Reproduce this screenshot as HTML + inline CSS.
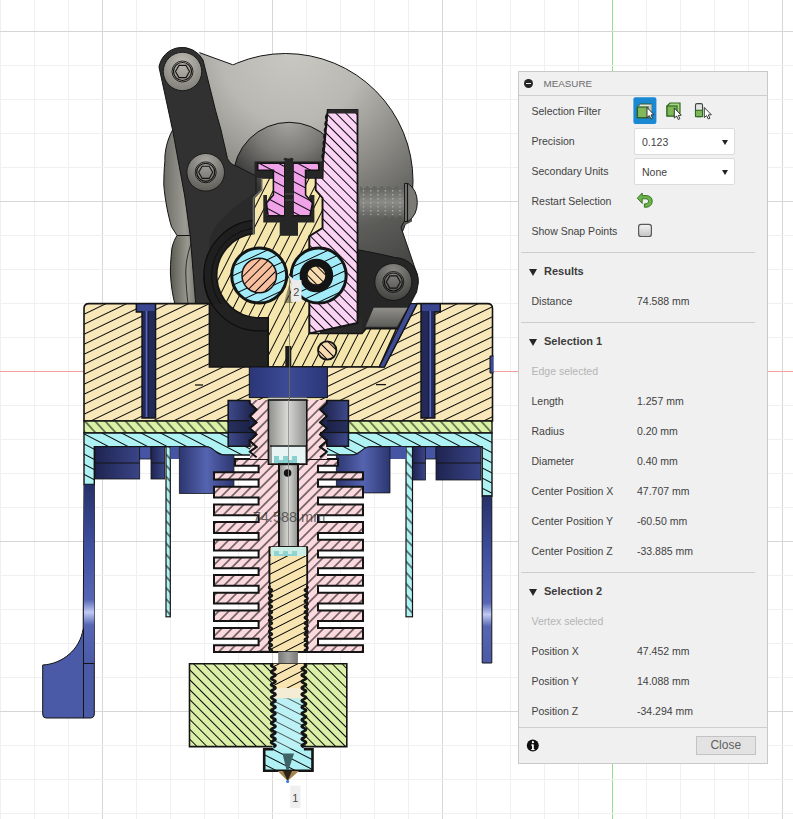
<!DOCTYPE html>
<html><head><meta charset="utf-8">
<style>
html,body{margin:0;padding:0;width:793px;height:819px;overflow:hidden;background:#fff;}
body{position:relative;font-family:"Liberation Sans",sans-serif;}
#bg{position:absolute;left:0;top:0;}
#cad{position:absolute;left:0;top:0;}
#panel{position:absolute;left:518px;top:71px;width:250px;height:693px;background:#f0f0f0;border:1px solid #c9c9c9;box-sizing:border-box;}
.hdr{position:absolute;left:0;top:0;width:100%;height:24px;border-bottom:1px solid #cfcfcf;box-sizing:border-box;}
.hdr .t{position:absolute;left:24.6px;top:6.2px;font-size:9.8px;color:#6b6b6b;letter-spacing:0px;}
.hdr .m{position:absolute;left:5px;top:7px;width:9px;height:9px;border-radius:50%;background:#262626;}
.hdr .m:after{content:"";position:absolute;left:2px;top:4px;width:5px;height:1.4px;background:#f0f0f0;}
.lb{position:absolute;left:12.5px;font-size:10.5px;margin-top:-0.2px;color:#424242;white-space:nowrap;}
.vl{position:absolute;left:118px;font-size:10.5px;margin-top:-0.2px;color:#424242;white-space:nowrap;}
.gr{color:#b4b4b4;}
.sec{position:absolute;left:25px;font-size:11px;font-weight:bold;color:#3c3c3c;}
.tri{position:absolute;left:10px;width:0;height:0;border-left:4px solid transparent;border-right:4px solid transparent;border-top:7px solid #262626;}
.sep{position:absolute;left:2px;width:234px;height:1px;background:#cdcdcd;}
.dd{position:absolute;left:115px;width:101px;height:27px;background:#fff;border:1px solid #dcdcdc;box-sizing:border-box;border-radius:2px;}
 .foot{position:absolute;left:0;top:654.8px;width:100%;height:1px;background:#cfcfcf;}
.btn{position:absolute;left:176.8px;top:663.8px;width:60px;height:19px;box-sizing:border-box;border:1px solid #c3c3c3;background:#e3e3e3;color:#606060;font-size:12px;text-align:center;line-height:17px;}
.dd span{position:absolute;left:7px;top:6.5px;font-size:10.5px;color:#424242;}
.dd i{position:absolute;right:6px;top:11px;border-left:3.5px solid transparent;border-right:3.5px solid transparent;border-top:5px solid #222;}
</style></head><body>
<svg id="bg" width="793" height="819">
<line x1="0.5" y1="0" x2="0.5" y2="819" stroke="#f0f0f0" stroke-width="1"/>
<line x1="34.5" y1="0" x2="34.5" y2="819" stroke="#f0f0f0" stroke-width="1"/>
<line x1="68.5" y1="0" x2="68.5" y2="819" stroke="#f0f0f0" stroke-width="1"/>
<line x1="102.5" y1="0" x2="102.5" y2="819" stroke="#d6d6d6" stroke-width="1"/>
<line x1="136.5" y1="0" x2="136.5" y2="819" stroke="#f0f0f0" stroke-width="1"/>
<line x1="170.5" y1="0" x2="170.5" y2="819" stroke="#f0f0f0" stroke-width="1"/>
<line x1="204.5" y1="0" x2="204.5" y2="819" stroke="#f0f0f0" stroke-width="1"/>
<line x1="238.5" y1="0" x2="238.5" y2="819" stroke="#f0f0f0" stroke-width="1"/>
<line x1="272.5" y1="0" x2="272.5" y2="819" stroke="#d6d6d6" stroke-width="1"/>
<line x1="306.5" y1="0" x2="306.5" y2="819" stroke="#f0f0f0" stroke-width="1"/>
<line x1="340.5" y1="0" x2="340.5" y2="819" stroke="#f0f0f0" stroke-width="1"/>
<line x1="374.5" y1="0" x2="374.5" y2="819" stroke="#f0f0f0" stroke-width="1"/>
<line x1="408.5" y1="0" x2="408.5" y2="819" stroke="#f0f0f0" stroke-width="1"/>
<line x1="442.5" y1="0" x2="442.5" y2="819" stroke="#d6d6d6" stroke-width="1"/>
<line x1="476.5" y1="0" x2="476.5" y2="819" stroke="#f0f0f0" stroke-width="1"/>
<line x1="510.5" y1="0" x2="510.5" y2="819" stroke="#f0f0f0" stroke-width="1"/>
<line x1="544.5" y1="0" x2="544.5" y2="819" stroke="#f0f0f0" stroke-width="1"/>
<line x1="578.5" y1="0" x2="578.5" y2="819" stroke="#f0f0f0" stroke-width="1"/>
<line x1="612.5" y1="0" x2="612.5" y2="819" stroke="#8fe08f" stroke-width="1"/>
<line x1="646.5" y1="0" x2="646.5" y2="819" stroke="#f0f0f0" stroke-width="1"/>
<line x1="680.5" y1="0" x2="680.5" y2="819" stroke="#f0f0f0" stroke-width="1"/>
<line x1="714.5" y1="0" x2="714.5" y2="819" stroke="#f0f0f0" stroke-width="1"/>
<line x1="748.5" y1="0" x2="748.5" y2="819" stroke="#f0f0f0" stroke-width="1"/>
<line x1="782.5" y1="0" x2="782.5" y2="819" stroke="#d6d6d6" stroke-width="1"/>
<line x1="0" y1="31.5" x2="793" y2="31.5" stroke="#d6d6d6" stroke-width="1"/>
<line x1="0" y1="65.5" x2="793" y2="65.5" stroke="#f0f0f0" stroke-width="1"/>
<line x1="0" y1="99.5" x2="793" y2="99.5" stroke="#f0f0f0" stroke-width="1"/>
<line x1="0" y1="133.5" x2="793" y2="133.5" stroke="#f0f0f0" stroke-width="1"/>
<line x1="0" y1="167.5" x2="793" y2="167.5" stroke="#f0f0f0" stroke-width="1"/>
<line x1="0" y1="201.5" x2="793" y2="201.5" stroke="#d6d6d6" stroke-width="1"/>
<line x1="0" y1="235.5" x2="793" y2="235.5" stroke="#f0f0f0" stroke-width="1"/>
<line x1="0" y1="269.5" x2="793" y2="269.5" stroke="#f0f0f0" stroke-width="1"/>
<line x1="0" y1="303.5" x2="793" y2="303.5" stroke="#f0f0f0" stroke-width="1"/>
<line x1="0" y1="337.5" x2="793" y2="337.5" stroke="#f0f0f0" stroke-width="1"/>
<line x1="0" y1="371.5" x2="793" y2="371.5" stroke="#f2a0a0" stroke-width="1"/>
<line x1="0" y1="405.5" x2="793" y2="405.5" stroke="#f0f0f0" stroke-width="1"/>
<line x1="0" y1="439.5" x2="793" y2="439.5" stroke="#f0f0f0" stroke-width="1"/>
<line x1="0" y1="473.5" x2="793" y2="473.5" stroke="#f0f0f0" stroke-width="1"/>
<line x1="0" y1="507.5" x2="793" y2="507.5" stroke="#f0f0f0" stroke-width="1"/>
<line x1="0" y1="541.5" x2="793" y2="541.5" stroke="#d6d6d6" stroke-width="1"/>
<line x1="0" y1="575.5" x2="793" y2="575.5" stroke="#f0f0f0" stroke-width="1"/>
<line x1="0" y1="609.5" x2="793" y2="609.5" stroke="#f0f0f0" stroke-width="1"/>
<line x1="0" y1="643.5" x2="793" y2="643.5" stroke="#f0f0f0" stroke-width="1"/>
<line x1="0" y1="677.5" x2="793" y2="677.5" stroke="#f0f0f0" stroke-width="1"/>
<line x1="0" y1="711.5" x2="793" y2="711.5" stroke="#d6d6d6" stroke-width="1"/>
<line x1="0" y1="745.5" x2="793" y2="745.5" stroke="#f0f0f0" stroke-width="1"/>
<line x1="0" y1="779.5" x2="793" y2="779.5" stroke="#f0f0f0" stroke-width="1"/>
<line x1="0" y1="813.5" x2="793" y2="813.5" stroke="#f0f0f0" stroke-width="1"/>
</svg>
<svg id="cad" width="793" height="819">
<defs><pattern id="hTan" patternUnits="userSpaceOnUse" width="36.0" height="9.0" patternTransform="translate(0,0) rotate(-25.8)"><line x1="0" y1="4.5" x2="36.0" y2="4.5" stroke="#000000" stroke-width="0.95"/></pattern>
<pattern id="hYel" patternUnits="userSpaceOnUse" width="35.2" height="8.8" patternTransform="translate(0,0) rotate(-63)"><line x1="0" y1="4.4" x2="35.2" y2="4.4" stroke="#000000" stroke-width="0.95"/></pattern>
<pattern id="hPin" patternUnits="userSpaceOnUse" width="26.0" height="6.5" patternTransform="translate(0,0) rotate(45)"><line x1="0" y1="3.25" x2="26.0" y2="3.25" stroke="#000000" stroke-width="0.95"/></pattern>
<pattern id="hPinkL" patternUnits="userSpaceOnUse" width="28.0" height="7.0" patternTransform="translate(0,0) rotate(45)"><line x1="0" y1="3.5" x2="28.0" y2="3.5" stroke="#000000" stroke-width="0.95"/></pattern>
<pattern id="hPinkI" patternUnits="userSpaceOnUse" width="36.0" height="9.0" patternTransform="translate(0,0) rotate(28)"><line x1="0" y1="4.5" x2="36.0" y2="4.5" stroke="#000000" stroke-width="0.95"/></pattern>
<pattern id="hSink" patternUnits="userSpaceOnUse" width="28.8" height="7.2" patternTransform="translate(0,0) rotate(-45)"><line x1="0" y1="3.6" x2="28.8" y2="3.6" stroke="#000000" stroke-width="0.95"/></pattern>
<pattern id="hCyan" patternUnits="userSpaceOnUse" width="36.0" height="9.0" patternTransform="translate(0,0) rotate(27.4)"><line x1="0" y1="4.5" x2="36.0" y2="4.5" stroke="#000000" stroke-width="0.95"/></pattern>
<pattern id="hGreenP" patternUnits="userSpaceOnUse" width="30.0" height="7.5" patternTransform="translate(0,0) rotate(47.6)"><line x1="0" y1="3.75" x2="30.0" y2="3.75" stroke="#000000" stroke-width="0.95"/></pattern>
<pattern id="hHeat" patternUnits="userSpaceOnUse" width="28.0" height="7.0" patternTransform="translate(0,0) rotate(45)"><line x1="0" y1="3.5" x2="28.0" y2="3.5" stroke="#000000" stroke-width="0.95"/></pattern>
<pattern id="hBear" patternUnits="userSpaceOnUse" width="34.4" height="8.6" patternTransform="translate(0,0) rotate(-25)"><line x1="0" y1="4.3" x2="34.4" y2="4.3" stroke="#000000" stroke-width="0.95"/></pattern>
<pattern id="hPeach" patternUnits="userSpaceOnUse" width="26.0" height="6.5" patternTransform="translate(0,0) rotate(-45)"><line x1="0" y1="3.25" x2="26.0" y2="3.25" stroke="#000000" stroke-width="0.95"/></pattern>
<pattern id="hBrk" patternUnits="userSpaceOnUse" width="33.6" height="8.4" patternTransform="translate(0,0) rotate(-27)"><line x1="0" y1="4.2" x2="33.6" y2="4.2" stroke="#000000" stroke-width="0.95"/></pattern>
<pattern id="hNoz" patternUnits="userSpaceOnUse" width="34.8" height="8.7" patternTransform="translate(0,0) rotate(27)"><line x1="0" y1="4.35" x2="34.8" y2="4.35" stroke="#000000" stroke-width="0.95"/></pattern>
<radialGradient id="gBody" cx="292" cy="50" r="240" gradientUnits="userSpaceOnUse">
<stop offset="0" stop-color="#c9c8c2"/><stop offset="0.3" stop-color="#b9b8b2"/><stop offset="0.55" stop-color="#8c8b86"/><stop offset="0.8" stop-color="#5c5c59"/><stop offset="1" stop-color="#474745"/></radialGradient>
<radialGradient id="gInner" cx="288" cy="118" r="75" gradientUnits="userSpaceOnUse">
<stop offset="0" stop-color="#a9a8a3"/><stop offset="0.5" stop-color="#7a7975"/><stop offset="1" stop-color="#343433"/></radialGradient>
<radialGradient id="gWash0" cx="0.5" cy="0.25" r="0.8"><stop offset="0" stop-color="#bcbab2"/><stop offset="1" stop-color="#7e7c76"/></radialGradient>
<radialGradient id="gWash1" cx="0.5" cy="0.2" r="0.85"><stop offset="0" stop-color="#a9a7a0"/><stop offset="1" stop-color="#5a5954"/></radialGradient>
<radialGradient id="gWash2" cx="0.5" cy="0.2" r="0.85"><stop offset="0" stop-color="#8a8984"/><stop offset="1" stop-color="#3e3e3c"/></radialGradient>
<linearGradient id="gLobeA" x1="0" y1="0" x2="1" y2="0"><stop offset="0" stop-color="#6f6e68"/><stop offset="0.6" stop-color="#9c9b94"/><stop offset="1" stop-color="#5d5c57"/></linearGradient>
<linearGradient id="gBolt" x1="0" y1="0" x2="0" y2="1"><stop offset="0" stop-color="#5f5f5c"/><stop offset="0.5" stop-color="#8a8a86"/><stop offset="1" stop-color="#5f5f5c"/></linearGradient>
<linearGradient id="gWedge" x1="0" y1="0" x2="0" y2="1"><stop offset="0" stop-color="#8f8e89"/><stop offset="1" stop-color="#5c5c59"/></linearGradient>
<linearGradient id="gLobe" x1="0" y1="0" x2="1" y2="0">
<stop offset="0" stop-color="#5a5a52"/><stop offset="0.5" stop-color="#9a998f"/><stop offset="1" stop-color="#55554f"/></linearGradient>
<linearGradient id="gNavyV" x1="0" y1="0" x2="1" y2="0">
<stop offset="0" stop-color="#2c3670"/><stop offset="0.5" stop-color="#5564b0"/><stop offset="1" stop-color="#2c3670"/></linearGradient>
<linearGradient id="gPost" x1="0" y1="0" x2="0" y2="1">
<stop offset="0" stop-color="#26306a"/><stop offset="0.35" stop-color="#4050a0"/><stop offset="0.64" stop-color="#5666b4"/><stop offset="0.71" stop-color="#c0caf4"/><stop offset="0.78" stop-color="#5666b4"/><stop offset="1" stop-color="#4a5aa6"/></linearGradient>
<linearGradient id="gNavyDark" x1="0" y1="0" x2="1" y2="0">
<stop offset="0" stop-color="#1e2450"/><stop offset="1" stop-color="#3a4588"/></linearGradient>
<linearGradient id="gNut0" x1="0" y1="0" x2="1" y2="0"><stop offset="0" stop-color="#3e4a8c"/><stop offset="1" stop-color="#1a1f44"/></linearGradient>
<linearGradient id="gNut1" x1="0" y1="0" x2="1" y2="0"><stop offset="0" stop-color="#1a1f44"/><stop offset="1" stop-color="#3e4a8c"/></linearGradient>
<linearGradient id="gRod" x1="0" y1="0" x2="1" y2="0"><stop offset="0" stop-color="#777775"/><stop offset="0.5" stop-color="#a2a2a0"/><stop offset="1" stop-color="#777775"/></linearGradient>
<linearGradient id="gNavyC" x1="0" y1="0" x2="1" y2="0"><stop offset="0" stop-color="#2b3678"/><stop offset="0.5" stop-color="#3d4b96"/><stop offset="1" stop-color="#2b3678"/></linearGradient>
<linearGradient id="gTube" x1="0" y1="0" x2="1" y2="0">
<stop offset="0" stop-color="#8e8e8c"/><stop offset="0.5" stop-color="#d8d8d4"/><stop offset="1" stop-color="#8e8e8c"/></linearGradient></defs>
<path d="M172.6,130 C167,140 164.5,152 164.9,160.8 C164,170 163.8,178 163.8,185 C165,200 168,215 171.5,226.7 L177,235.5 L200,235.5 L200,130 Z" fill="url(#gLobeA)" stroke="#141414" stroke-width="1"/>
<path d="M177,235.5 C173,242 171.5,248 171.5,253 C170.5,262 170.4,268 170.4,273 C171,285 172.5,295 174.8,303.6 L205,303.6 L205,235.5 Z" fill="url(#gLobe)" stroke="#141414" stroke-width="1"/>
<path d="M191,244 C187,255 185.8,265 185.8,273 C186,285 187,295 188,303.6" fill="none" stroke="#141414" stroke-width="0.8"/>
<clipPath id="cpBody"><path d="M150,0 L159,67 L172.6,130 L184.7,196 L190.2,235.5 L195.7,303.6 L800,303.6 L800,0 Z"/></clipPath>
<circle cx="285.5" cy="181" r="127.5" fill="url(#gBody)" stroke="#141414" stroke-width="1" clip-path="url(#cpBody)"/>
<path d="M199.4,52.6 L232.6,64.7 L245,75 L240,130 L215,140 Z" fill="url(#gBody)"/>
<path d="M199.4,52.6 L232.6,64.7" stroke="#141414" stroke-width="1"/>
<path d="M358,180 L412,183 L412,221.5 L401,227.3 L417.3,275 L395,300 L358,300 Z" fill="url(#gBody)"/>
<path d="M404,221.5 L401,227.3 L417.3,275" fill="none" stroke="#141414" stroke-width="1"/>
<circle cx="289.2" cy="178.3" r="56" fill="url(#gInner)" stroke="#141414" stroke-width="1"/>
<path d="M359.8,186 L359.8,186 L363.4,189 L367.1,186 L370.8,189 L374.4,186 L378.1,189 L381.7,186 L385.4,189 L389.0,186 L392.7,189 L396.3,186 L399.9,189 L403.6,186 L404.6,186 L404.6,218.5 L403.6,218.5 L399.9,215.5 L396.3,218.5 L392.7,215.5 L389.0,218.5 L385.4,215.5 L381.7,218.5 L378.1,215.5 L374.4,218.5 L370.8,215.5 L367.1,218.5 L363.4,215.5 L359.8,218.5 Z" fill="url(#gBolt)"/>
<path d="M363.5,190 l0,25" stroke="#a9a8a2" stroke-width="1.4" stroke-dasharray="1.5 2.5"/>
<path d="M370.8,190 l0,25" stroke="#a9a8a2" stroke-width="1.4" stroke-dasharray="1.5 2.5"/>
<path d="M378.1,190 l0,25" stroke="#a9a8a2" stroke-width="1.4" stroke-dasharray="1.5 2.5"/>
<path d="M385.4,190 l0,25" stroke="#a9a8a2" stroke-width="1.4" stroke-dasharray="1.5 2.5"/>
<path d="M392.7,190 l0,25" stroke="#a9a8a2" stroke-width="1.4" stroke-dasharray="1.5 2.5"/>
<path d="M400.0,190 l0,25" stroke="#a9a8a2" stroke-width="1.4" stroke-dasharray="1.5 2.5"/>
<path d="M404.6,183.4 L408,183.4 Q417.3,190 417.3,202.5 Q417.3,215 408,221.5 L404.6,221.5 Z" fill="#7b7a75" stroke="#141414" stroke-width="1"/>
<line x1="407.5" y1="184" x2="407.5" y2="221" stroke="#141414" stroke-width="1.2"/>
<path d="M159,67 A23.5,23.5 0 0 1 203,60 L215.6,110.6 L221,130 L227.5,158.6 C230,163 232,165 236.5,166 C242,169 248,172 256,176 L256,303.6 L195.7,303.6 L190.2,235.5 L184.7,196 L172.6,130 Z" fill="#313131" stroke="#141414" stroke-width="1"/>
<path d="M209.4,303 L209.4,240 C212,225 235,205 256,192 L300,192 L300,367 L209.4,367 Z" fill="#2a2a2a"/>
<circle cx="259.2" cy="275.5" r="55.4" fill="#1f1f1f" stroke="#0e0e0e" stroke-width="1.2"/>
<circle cx="259.2" cy="275.5" r="47.6" fill="none" stroke="#0e0e0e" stroke-width="1"/>
<rect x="209.6" y="304" width="58.6" height="62.5" fill="#222222"/>
<path d="M204,275.5 A55.4,55.4 0 0 0 259.2,330.9 L268.2,330.9" fill="none" stroke="#0e0e0e" stroke-width="1.2"/>
<path d="M357.8,249.8 C370,252 385,255 395,257.6 A23.5,23.5 0 0 1 418.3,283 L416.6,292 L410.5,303.6 L398,328.8 L362,333.4 L357.8,333.4 Z" fill="#262626" stroke="#141414" stroke-width="1"/>
<path d="M373.7,307.7 L407.5,307.7 L396.9,326.8 L365.6,326.8 Z" fill="url(#gWedge)"/>
<circle cx="182.5" cy="71.5" r="19.2" fill="url(#gWash0)" stroke="#141414" stroke-width="0.9"/>
<circle cx="182.5" cy="71.5" r="10.5" fill="none" stroke="#141414" stroke-width="0.9"/>
<circle cx="182.5" cy="71.5" r="9" fill="none" stroke="#141414" stroke-width="1.2"/>
<polygon points="189.5,71.5 186.0,77.6 179.0,77.6 175.5,71.5 179.0,65.4 186.0,65.4" fill="none" stroke="#141414" stroke-width="1.1"/>
<circle cx="205.7" cy="172.3" r="18.8" fill="url(#gWash1)" stroke="#141414" stroke-width="0.9"/>
<circle cx="205.7" cy="172.3" r="10.5" fill="none" stroke="#141414" stroke-width="0.9"/>
<circle cx="205.7" cy="172.3" r="9" fill="none" stroke="#141414" stroke-width="1.2"/>
<polygon points="212.7,172.3 209.2,178.4 202.2,178.4 198.7,172.3 202.2,166.2 209.2,166.2" fill="none" stroke="#141414" stroke-width="1.1"/>
<circle cx="393.3" cy="282" r="18.5" fill="url(#gWash2)" stroke="#141414" stroke-width="0.9"/>
<circle cx="393.3" cy="282" r="10.5" fill="none" stroke="#141414" stroke-width="0.9"/>
<circle cx="393.3" cy="282" r="9" fill="none" stroke="#141414" stroke-width="1.2"/>
<polygon points="400.3,282.0 396.8,288.1 389.8,288.1 386.3,282.0 389.8,275.9 396.8,275.9" fill="none" stroke="#141414" stroke-width="1.1"/>
<path d="M320,333.5 L362,333.5 L362,318 L320,322 Z" fill="#2a2a2a"/>
<path d="M254,233.5 L254,198 L261.4,190 L261.4,178 L315.7,178 L315.7,190 L322.6,198 L322.6,228 L309.4,236.2 L309.4,333.5 L362,333.4 L366,328.8 L396.4,328.8 L379.3,367 L268.2,367 L268.2,317.8 L259.2,317.8 A42.3,42.3 0 0 1 254,233.5 Z" fill="#f4e6ad"/>
<path d="M254,233.5 L254,198 L261.4,190 L261.4,178 L315.7,178 L315.7,190 L322.6,198 L322.6,228 L309.4,236.2 L309.4,333.5 L362,333.4 L366,328.8 L396.4,328.8 L379.3,367 L268.2,367 L268.2,317.8 L259.2,317.8 A42.3,42.3 0 0 1 254,233.5 Z" fill="url(#hYel)" stroke="#141414" stroke-width="1.6"/>
<path d="M261.4,178 L261.4,190 L253.5,198 L253.5,234" fill="none" stroke="#6a6a6a" stroke-width="1.6"/>
<path d="M327.7,110 L357.5,110 L357.5,323 L309.4,333.5 L309.4,236.2 L322.6,228 L322.6,198 L315.7,190 L315.7,177.8 L322.6,177.8 L323,162 Z" fill="#fbd3f5"/>
<path d="M327.7,110 L357.5,110 L357.5,323 L309.4,333.5 L309.4,236.2 L322.6,228 L322.6,198 L315.7,190 L315.7,177.8 L322.6,177.8 L323,162 Z" fill="url(#hPinkL)" stroke="#141414" stroke-width="1.8"/>
<path d="M327.5,114 q-3,3 -0.6,6.5 q-3,3 -0.6,6.5 q-3,3 -0.6,6.5 q-3,3 -0.6,6.5 q-3,3 -0.6,6.5 q-3,3 -0.6,6.5 q-3,3 -0.6,6.5" fill="none" stroke="#141414" stroke-width="1.8"/>
<path d="M327.7,113.4 L327.7,111 Q328.5,109.4 331,109.4 L358,109.4 L358,113.4 Z" fill="#2a2a2a"/>
<rect x="254.5" y="161.4" width="68.1" height="16.4" fill="#262626"/>
<path d="M263.3,195 L263.3,222.6 L314.4,222.6 L314.4,195 L310,195 L310,216 L267,216 L267,195 Z" fill="#262626"/>
<rect x="279.7" y="222" width="18.3" height="13.8" fill="#262626"/>
<path d="M257.7,163.3 L284.8,163.3 L284.8,215.7 L268,215.7 L266.5,203 L273.4,195 L273.4,170.3 L257.7,170.3 Z" fill="#f1a3ea"/>
<path d="M257.7,163.3 L284.8,163.3 L284.8,215.7 L268,215.7 L266.5,203 L273.4,195 L273.4,170.3 L257.7,170.3 Z" fill="url(#hPinkI)" stroke="#141414" stroke-width="1.6"/>
<path d="M293,163.3 L318.8,163.3 L318.8,170.3 L305.6,170.3 L305.6,195 L312.5,203 L310,215.7 L293,215.7 Z" fill="#f1a3ea"/>
<path d="M293,163.3 L318.8,163.3 L318.8,170.3 L305.6,170.3 L305.6,195 L312.5,203 L310,215.7 L293,215.7 Z" fill="url(#hPinkI)" stroke="#141414" stroke-width="1.6"/>
<rect x="284.8" y="158.5" width="8.2" height="64" fill="#262626"/>
<path d="M284,160 q1.5,-3 3,0 M290,160 q1.5,-3 3,0" fill="#262626" stroke="#262626" stroke-width="1.5"/>
<line x1="284.8" y1="194" x2="293" y2="194" stroke="#555" stroke-width="0.8"/>
<line x1="284.8" y1="200" x2="293" y2="200" stroke="#555" stroke-width="0.8"/>
<circle cx="259.2" cy="275.5" r="27.5" fill="#a2ecf9"/>
<circle cx="259.2" cy="275.5" r="27.5" fill="url(#hBear)" stroke="#141414" stroke-width="3"/>
<circle cx="259.2" cy="275.5" r="17.2" fill="#f7bf9e"/>
<circle cx="259.2" cy="275.5" r="17.2" fill="url(#hPeach)" stroke="#141414" stroke-width="1.5"/>
<circle cx="318.7" cy="275.5" r="27.5" fill="#a2ecf9"/>
<circle cx="318.7" cy="275.5" r="27.5" fill="url(#hBear)" stroke="#141414" stroke-width="3"/>
<circle cx="316.4" cy="275.5" r="13.3" fill="none" stroke="#141414" stroke-width="7"/>
<circle cx="316.4" cy="275.5" r="9.7" fill="#f8dcb0"/>
<circle cx="316.4" cy="275.5" r="9.7" fill="url(#hPin)" stroke="#141414" stroke-width="1.5"/>
<circle cx="327.2" cy="350.5" r="9.2" fill="#f8dcb0"/>
<circle cx="327.2" cy="350.5" r="9.2" fill="url(#hPin)" stroke="#141414" stroke-width="1.8"/>
<rect x="285.3" y="346" width="6" height="21" fill="#1c1c1c"/>
<path d="M84,308.6 Q84,303.6 89,303.6 L209.4,303.6 L209.4,367 L328,367 L384.3,367 L417.1,303.6 L487.5,303.6 Q492.5,303.6 492.5,308.6 L492.5,421 L84,421 Z" fill="#f8e7b9"/>
<path d="M84,308.6 Q84,303.6 89,303.6 L209.4,303.6 L209.4,367 L328,367 L384.3,367 L417.1,303.6 L487.5,303.6 Q492.5,303.6 492.5,308.6 L492.5,421 L84,421 Z" fill="url(#hTan)" stroke="#141414" stroke-width="1.6"/>
<rect x="249.3" y="367" width="78.1" height="30.6" fill="url(#gNavyC)" stroke="#141414" stroke-width="1"/>
<rect x="268.4" y="397.6" width="38.4" height="2.6" fill="#c8c8c4"/>
<line x1="289.5" y1="367" x2="289.5" y2="400" stroke="#1a2040" stroke-width="1"/>
<path d="M417.1,303.6 L410.5,303.6 L379.3,367 L384.3,367 Z" fill="#3e4c96" stroke="#141414" stroke-width="1.2"/>
<path d="M136.3,303.6 L155.6,303.6 L155.6,418 L142,418 L142,312 L136.3,312 Z" fill="#232a58" stroke="#141414" stroke-width="1.4"/>
<rect x="137.3" y="304.5" width="17.299999999999983" height="6.5" fill="#3a4690"/>
<line x1="146.5" y1="311" x2="146.5" y2="417" stroke="#5868c0" stroke-width="1.6"/>
<line x1="148.5" y1="311" x2="148.5" y2="417" stroke="#151a3a" stroke-width="0.8"/>
<path d="M421,303.6 L440.3,303.6 L440.3,312 L434.8,312 L434.8,418 L421,418 Z" fill="#232a58" stroke="#141414" stroke-width="1.4"/>
<rect x="422" y="304.5" width="17.30000000000001" height="6.5" fill="#3a4690"/>
<line x1="430.3" y1="311" x2="430.3" y2="417" stroke="#5868c0" stroke-width="1.6"/>
<line x1="428.3" y1="311" x2="428.3" y2="417" stroke="#151a3a" stroke-width="0.8"/>
<line x1="195" y1="385" x2="203" y2="385" stroke="#141414" stroke-width="1.3"/>
<line x1="376" y1="384.6" x2="386" y2="384.6" stroke="#141414" stroke-width="1.3"/>
<path d="M493.5,356 L490,356 L490,373 L493.5,373" fill="#3b4a98" stroke="#141414" stroke-width="1"/>
<path d="M84,421 L492,421 L492,433 L84,433 Z" fill="#d9f2a6"/>
<path d="M84,421 L492,421 L492,433 L84,433 Z" fill="url(#hGreenP)" stroke="#141414" stroke-width="1.4"/>
<path d="M84,433 L492,433 L492,496 L482.2,496 L482.2,446.8 L371,446.8 C362,446.8 361,455 352,455 L224,455 C215,455 214,446.8 206,446.8 L94.3,446.8 L94.3,484.5 L84,484.5 Z" fill="#aef2f4"/>
<path d="M84,433 L492,433 L492,496 L482.2,496 L482.2,446.8 L371,446.8 C362,446.8 361,455 352,455 L224,455 C215,455 214,446.8 206,446.8 L94.3,446.8 L94.3,484.5 L84,484.5 Z" fill="url(#hCyan)" stroke="#141414" stroke-width="1.4"/>
<rect x="166" y="446.8" width="4.300000000000011" height="170" fill="#aef2f4"/>
<rect x="166" y="446.8" width="4.300000000000011" height="170" fill="url(#hGreenP)" stroke="#141414" stroke-width="1.2"/>
<rect x="406" y="446.8" width="6.5" height="170" fill="#aef2f4"/>
<rect x="406" y="446.8" width="6.5" height="170" fill="url(#hGreenP)" stroke="#141414" stroke-width="1.2"/>
<rect x="95" y="446.8" width="44.69999999999999" height="32.19999999999999" fill="url(#gNavyDark)" stroke="#141414" stroke-width="0.8"/>
<line x1="95" y1="463" x2="139.7" y2="463" stroke="#141414" stroke-width="1"/>
<rect x="139.7" y="446.8" width="11.300000000000011" height="12.199999999999989" fill="#4555a3" stroke="#141414" stroke-width="0.8"/>
<rect x="151" y="446.8" width="13.599999999999994" height="32.19999999999999" fill="url(#gNavyDark)" stroke="#141414" stroke-width="0.8"/>
<line x1="151" y1="463" x2="164.6" y2="463" stroke="#141414" stroke-width="1"/>
<rect x="412.5" y="446.8" width="12.899999999999977" height="33.19999999999999" fill="url(#gNavyDark)" stroke="#141414" stroke-width="0.8"/>
<line x1="412.5" y1="463" x2="425.4" y2="463" stroke="#141414" stroke-width="1"/>
<rect x="425.4" y="446.8" width="10.600000000000023" height="12.199999999999989" fill="#4555a3" stroke="#141414" stroke-width="0.8"/>
<rect x="436" y="446.8" width="45" height="33.19999999999999" fill="url(#gNavyDark)" stroke="#141414" stroke-width="0.8"/>
<line x1="436" y1="463" x2="481" y2="463" stroke="#141414" stroke-width="1"/>
<rect x="170.3" y="446.8" width="9.1" height="12.2" fill="#4555a3"/>
<rect x="390" y="446.8" width="16" height="12.2" fill="#4555a3"/>
<path d="M179.4,446.8 L206,446.8 C214,446.8 215,455 224,455 L233.9,455 L233.9,493.5 L179.4,493.5 Z" fill="url(#gNavyV)" stroke="#141414" stroke-width="0.8"/>
<path d="M390,446.8 L371,446.8 C362,446.8 361,455 352,455 L336.4,455 L336.4,492.9 L390,492.9 Z" fill="url(#gNavyV)" stroke="#141414" stroke-width="0.8"/>
<path d="M84,484.5 L94.3,484.5 L94.3,714 Q94.3,718 90,718 L46,718 Q42.7,718 42.7,714 L42.7,665 C62,664 80,650 83.2,628.6 Z" fill="#4a5aa6" stroke="#141414" stroke-width="1"/>
<rect x="84" y="484.5" width="10.3" height="180" fill="url(#gPost)"/>
<line x1="83.5" y1="663.5" x2="94.3" y2="663.5" stroke="#141414" stroke-width="1"/>
<line x1="83.5" y1="628" x2="83.5" y2="718" stroke="#141414" stroke-width="1"/>
<path d="M482.2,496 L491.8,496 L491.8,663 L482.2,663 Z" fill="url(#gPost)" stroke="#141414" stroke-width="1"/>
<path d="M235,459 L338,459 L338,465.7 L318,465.7 L318,472.3 L363,472.3 L363,479.6 L318,479.6 L318,486.7 L363,486.7 L363,497.5 L318,497.5 L318,504.4 L363,504.4 L363,515.2 L318,515.2 L318,522.1 L363,522.1 L363,532.9 L318,532.9 L318,539.8 L363,539.8 L363,550.5 L318,550.5 L318,557.4 L363,557.4 L363,568.2 L318,568.2 L318,575.1 L363,575.1 L363,585.8 L318,585.8 L318,592.8 L363,592.8 L363,603.5 L318,603.5 L318,610.4 L363,610.4 L363,621.1 L318,621.1 L318,628.1 L363,628.1 L363,638.8 L318,638.8 L318,645.2 L363,645.2 L363,652 L318,652 L258.6,651.7 L258.6,652 L214,652 L214,645.2 L258.6,645.2 L258.6,638.8 L214,638.8 L214,628.1 L258.6,628.1 L258.6,621.1 L214,621.1 L214,610.4 L258.6,610.4 L258.6,603.5 L214,603.5 L214,592.8 L258.6,592.8 L258.6,585.8 L214,585.8 L214,575.1 L258.6,575.1 L258.6,568.2 L214,568.2 L214,557.4 L258.6,557.4 L258.6,550.5 L214,550.5 L214,539.8 L258.6,539.8 L258.6,532.9 L214,532.9 L214,522.1 L258.6,522.1 L258.6,515.2 L214,515.2 L214,504.4 L258.6,504.4 L258.6,497.5 L214,497.5 L214,486.7 L258.6,486.7 L258.6,479.6 L214,479.6 L214,472.3 L258.6,472.3 L258.6,465.7 L235,465.7 Z" fill="#fbd9de"/>
<path d="M235,459 L338,459 L338,465.7 L318,465.7 L318,472.3 L363,472.3 L363,479.6 L318,479.6 L318,486.7 L363,486.7 L363,497.5 L318,497.5 L318,504.4 L363,504.4 L363,515.2 L318,515.2 L318,522.1 L363,522.1 L363,532.9 L318,532.9 L318,539.8 L363,539.8 L363,550.5 L318,550.5 L318,557.4 L363,557.4 L363,568.2 L318,568.2 L318,575.1 L363,575.1 L363,585.8 L318,585.8 L318,592.8 L363,592.8 L363,603.5 L318,603.5 L318,610.4 L363,610.4 L363,621.1 L318,621.1 L318,628.1 L363,628.1 L363,638.8 L318,638.8 L318,645.2 L363,645.2 L363,652 L318,652 L258.6,651.7 L258.6,652 L214,652 L214,645.2 L258.6,645.2 L258.6,638.8 L214,638.8 L214,628.1 L258.6,628.1 L258.6,621.1 L214,621.1 L214,610.4 L258.6,610.4 L258.6,603.5 L214,603.5 L214,592.8 L258.6,592.8 L258.6,585.8 L214,585.8 L214,575.1 L258.6,575.1 L258.6,568.2 L214,568.2 L214,557.4 L258.6,557.4 L258.6,550.5 L214,550.5 L214,539.8 L258.6,539.8 L258.6,532.9 L214,532.9 L214,522.1 L258.6,522.1 L258.6,515.2 L214,515.2 L214,504.4 L258.6,504.4 L258.6,497.5 L214,497.5 L214,486.7 L258.6,486.7 L258.6,479.6 L214,479.6 L214,472.3 L258.6,472.3 L258.6,465.7 L235,465.7 Z" fill="url(#hSink)" stroke="#141414" stroke-width="2" stroke-linejoin="miter"/>
<path d="M250,400 L327,400 L327,459 L250,459 Z" fill="#fbd9de"/>
<path d="M250,400 L327,400 L327,459 L250,459 Z" fill="url(#hSink)"/>
<path d="M228.2,400.5 L249.7,400.5 L249.7,403.2 L256.6,409.6 L249.7,416.0 L256.6,422.5 L249.7,428.2 L256.6,434.4 L249.7,440.8 L249.7,446.3 L228.2,446.3 Z" fill="url(#gNut0)" stroke="#141414" stroke-width="1.6" stroke-linejoin="miter"/>
<rect x="228.2" y="420.6" width="21.5" height="11.9" fill="#161b3a" fill-opacity="0.55"/>
<line x1="228.2" y1="420.6" x2="249.7" y2="420.6" stroke="#141414" stroke-width="1.2"/>
<line x1="228.2" y1="432.5" x2="256.6" y2="432.5" stroke="#141414" stroke-width="1.2"/>
<path d="M249.7,446.3 L249.7,440.8 L256.6,447.0 L249.7,451.8 L256.6,457.3" fill="none" stroke="#141414" stroke-width="1.8"/>
<path d="M249.7,400.5 L249.7,400.5 L249.7,403.2 L256.6,409.6 L249.7,416.0 L256.6,422.5 L249.7,428.2 L256.6,434.4 L249.7,440.8 L256.6,447.0 L249.7,451.8" fill="none" stroke="#141414" stroke-width="1.8"/>
<path d="M348.40000000000003,400.5 L326.9,400.5 L326.9,403.2 L320.0,409.6 L326.9,416.0 L320.0,422.5 L326.9,428.2 L320.0,434.4 L326.9,440.8 L326.9,446.3 L348.40000000000003,446.3 Z" fill="url(#gNut1)" stroke="#141414" stroke-width="1.6" stroke-linejoin="miter"/>
<rect x="326.90000000000003" y="420.6" width="21.5" height="11.9" fill="#161b3a" fill-opacity="0.55"/>
<line x1="348.40000000000003" y1="420.6" x2="326.90000000000003" y2="420.6" stroke="#141414" stroke-width="1.2"/>
<line x1="348.40000000000003" y1="432.5" x2="320.0" y2="432.5" stroke="#141414" stroke-width="1.2"/>
<path d="M326.9,446.3 L326.9,440.8 L320.0,447.0 L326.9,451.8 L320.0,457.3" fill="none" stroke="#141414" stroke-width="1.8"/>
<path d="M326.9,400.5 L326.9,400.5 L326.9,403.2 L320.0,409.6 L326.9,416.0 L320.0,422.5 L326.9,428.2 L320.0,434.4 L326.9,440.8 L320.0,447.0 L326.9,451.8" fill="none" stroke="#141414" stroke-width="1.8"/>
<rect x="268.4" y="400" width="38.4" height="64.2" fill="url(#gTube)" stroke="#141414" stroke-width="1.6"/>
<rect x="272" y="445" width="33" height="18" fill="#e8f4f4"/>
<path d="M274,463 L274,456 L279,456 L279,460 L283,460 L283,456 L288,456 L288,460 L292,460 L292,456 L297,456 L297,463 Z" fill="#88d0d0"/>
<line x1="270" y1="446" x2="307" y2="446" stroke="#141414" stroke-width="1.5"/>
<rect x="279" y="464.2" width="19" height="83" fill="url(#gTube)" stroke="#141414" stroke-width="2"/>
<circle cx="287.6" cy="473" r="3.8" fill="#141414"/>
<line x1="288.5" y1="400" x2="288.5" y2="782" stroke="#8a8a8a" stroke-width="0.8"/>
<path d="M269.6,547 L307.1,547 L307.1,651.7 L269.6,651.7 Z" fill="#f8e4b0"/>
<path d="M269.6,547 L307.1,547 L307.1,651.7 L269.6,651.7 Z" fill="url(#hBrk)" stroke="#141414" stroke-width="1.6"/>
<rect x="271" y="547" width="35" height="9" fill="#cdeee4"/>
<path d="M274,556 L274,551 L279,551 L279,554 L283,554 L283,551 L288,551 L288,554 L292,554 L292,551 L297,551 L297,556 Z" fill="#8fd4d0"/>
<line x1="307.5" y1="547" x2="307.5" y2="583" stroke="#141414" stroke-width="1.2"/>
<line x1="269.2" y1="547" x2="269.2" y2="583" stroke="#141414" stroke-width="1.2"/>
<path d="M270.5,586 q-3.2,1.38 0,2.75 q3.2,1.38 0,2.75 q-3.2,1.38 0,2.75 q3.2,1.38 0,2.75 q-3.2,1.38 0,2.75 q3.2,1.38 0,2.75 q-3.2,1.38 0,2.75 q3.2,1.38 0,2.75 q-3.2,1.38 0,2.75 q3.2,1.38 0,2.75 q-3.2,1.38 0,2.75 q3.2,1.38 0,2.75 q-3.2,1.38 0,2.75 q3.2,1.38 0,2.75 q-3.2,1.38 0,2.75 q3.2,1.38 0,2.75 q-3.2,1.38 0,2.75 q3.2,1.38 0,2.75 q-3.2,1.38 0,2.75 q3.2,1.38 0,2.75 q-3.2,1.38 0,2.75 q3.2,1.38 0,2.75 q-3.2,1.38 0,2.75 q3.2,1.38 0,2.75" fill="none" stroke="#141414" stroke-width="2.2"/>
<path d="M306.2,586 q3.2,1.38 0,2.75 q-3.2,1.38 0,2.75 q3.2,1.38 0,2.75 q-3.2,1.38 0,2.75 q3.2,1.38 0,2.75 q-3.2,1.38 0,2.75 q3.2,1.38 0,2.75 q-3.2,1.38 0,2.75 q3.2,1.38 0,2.75 q-3.2,1.38 0,2.75 q3.2,1.38 0,2.75 q-3.2,1.38 0,2.75 q3.2,1.38 0,2.75 q-3.2,1.38 0,2.75 q3.2,1.38 0,2.75 q-3.2,1.38 0,2.75 q3.2,1.38 0,2.75 q-3.2,1.38 0,2.75 q3.2,1.38 0,2.75 q-3.2,1.38 0,2.75 q3.2,1.38 0,2.75 q-3.2,1.38 0,2.75 q3.2,1.38 0,2.75 q-3.2,1.38 0,2.75" fill="none" stroke="#141414" stroke-width="2.2"/>
<rect x="278.2" y="651.7" width="19.7" height="12.1" fill="url(#gRod)"/>
<path d="M189.5,663.8 L346.8,663.8 L346.8,746.6 L189.5,746.6 Z" fill="#dcefa8"/>
<path d="M189.5,663.8 L346.8,663.8 L346.8,746.6 L189.5,746.6 Z" fill="url(#hHeat)" stroke="#141414" stroke-width="1.6"/>
<rect x="272" y="663.8" width="32" height="35" fill="#f8e4b0"/>
<rect x="272" y="663.8" width="32" height="35" fill="url(#hBrk)"/>
<rect x="272" y="688" width="32" height="10.6" fill="#f5ecd6"/>
<path d="M272.5,698.6 L304,698.6 L304,749.3 L312.5,749.3 L312.5,770.7 L264.2,770.7 L264.2,749.3 L272.5,749.3 Z" fill="#aef0f4"/>
<path d="M272.5,698.6 L304,698.6 L304,749.3 L312.5,749.3 L312.5,770.7 L264.2,770.7 L264.2,749.3 L272.5,749.3 Z" fill="url(#hNoz)"/>
<rect x="274" y="698.6" width="28" height="50" fill="#d8f6f6" fill-opacity="0.35"/>
<path d="M273.3,749.3 L264.2,749.3 L264.2,770.7 L312.5,770.7 L312.5,749.3 L303.9,749.3" fill="none" stroke="#141414" stroke-width="2.6"/>
<path d="M282.5,753.6 L294.1,753.6 L288.5,770 L286.5,770 Z" fill="#3f6468"/>
<path d="M277.6,771 L299,771 L287.6,781 Z" fill="#a5824e"/>
<path d="M283,771 L292,771 L287.6,781 Z" fill="#2a2418"/>
<circle cx="287.6" cy="781.5" r="1.6" fill="#3a7fe0"/>
<path d="M273.3,664 q-4.4,1.60 0,3.20 q4.4,1.60 0,3.20 q-4.4,1.60 0,3.20 q4.4,1.60 0,3.20 q-4.4,1.60 0,3.20 q4.4,1.60 0,3.20 q-4.4,1.60 0,3.20 q4.4,1.60 0,3.20 q-4.4,1.60 0,3.20 q4.4,1.60 0,3.20 q-4.4,1.60 0,3.20 q4.4,1.60 0,3.20 q-4.4,1.60 0,3.20 q4.4,1.60 0,3.20 q-4.4,1.60 0,3.20 q4.4,1.60 0,3.20 q-4.4,1.60 0,3.20 q4.4,1.60 0,3.20 q-4.4,1.60 0,3.20 q4.4,1.60 0,3.20 q-4.4,1.60 0,3.20 q4.4,1.60 0,3.20 q-4.4,1.60 0,3.20 q4.4,1.60 0,3.20 q-4.4,1.60 0,3.20 q4.4,1.60 0,3.20" fill="none" stroke="#141414" stroke-width="2.8"/>
<path d="M303.9,664 q4.4,1.60 0,3.20 q-4.4,1.60 0,3.20 q4.4,1.60 0,3.20 q-4.4,1.60 0,3.20 q4.4,1.60 0,3.20 q-4.4,1.60 0,3.20 q4.4,1.60 0,3.20 q-4.4,1.60 0,3.20 q4.4,1.60 0,3.20 q-4.4,1.60 0,3.20 q4.4,1.60 0,3.20 q-4.4,1.60 0,3.20 q4.4,1.60 0,3.20 q-4.4,1.60 0,3.20 q4.4,1.60 0,3.20 q-4.4,1.60 0,3.20 q4.4,1.60 0,3.20 q-4.4,1.60 0,3.20 q4.4,1.60 0,3.20 q-4.4,1.60 0,3.20 q4.4,1.60 0,3.20 q-4.4,1.60 0,3.20 q4.4,1.60 0,3.20 q-4.4,1.60 0,3.20 q4.4,1.60 0,3.20 q-4.4,1.60 0,3.20" fill="none" stroke="#141414" stroke-width="2.8"/>
<rect x="290.2" y="785.5" width="10.3" height="22.7" fill="#efefef"/>
<text x="295.3" y="802" font-family="Liberation Sans" font-size="11" fill="#4a4a4a" text-anchor="middle">1</text>
<line x1="289.5" y1="276" x2="289.5" y2="400" stroke="#7a7a6a" stroke-width="0.8"/>
<path d="M284,303 L289.5,283 L292.5,303 Z" fill="#4a4530" fill-opacity="0.55"/>
<path d="M288.5,275 L295,280.1 L291.1,283 Z" fill="#dfe6ea"/>
<rect x="291.1" y="280.1" width="10.4" height="21.7" fill="#ececec"/>
<text x="296.3" y="295.5" font-family="Liberation Sans" font-size="11" fill="#4a4a4a" text-anchor="middle">2</text>
<text x="289" y="522" font-family="Liberation Sans" font-size="14.5" fill="#2e2e2e" fill-opacity="0.72" text-anchor="middle">74.588 mm</text>
</svg>
<div id="panel">
 <div class="hdr"><div class="m"></div><div class="t">MEASURE</div></div>
 <div class="lb" style="top:33px">Selection Filter</div>
 <div class="lb" style="top:63px">Precision</div>
 <div class="lb" style="top:93px">Secondary Units</div>
 <div class="lb" style="top:123px">Restart Selection</div>
 <div class="lb" style="top:153px">Show Snap Points</div>
 <div class="dd" style="top:56px"><span>0.123</span><i></i></div>
 <div class="dd" style="top:86px"><span>None</span><i></i></div>
 <div class="sep" style="top:180px"></div>
 <div class="tri" style="top:197px"></div><div class="sec" style="top:193px">Results</div>
 <div class="lb" style="top:223px">Distance</div><div class="vl" style="top:223px">74.588 mm</div>
 <div class="sep" style="top:250px"></div>
 <div class="tri" style="top:267px"></div><div class="sec" style="top:263px">Selection 1</div>
 <div class="lb gr" style="top:293px">Edge selected</div>
 <div class="lb" style="top:323px">Length</div><div class="vl" style="top:323px">1.257 mm</div>
 <div class="lb" style="top:353px">Radius</div><div class="vl" style="top:353px">0.20 mm</div>
 <div class="lb" style="top:383px">Diameter</div><div class="vl" style="top:383px">0.40 mm</div>
 <div class="lb" style="top:413px">Center Position X</div><div class="vl" style="top:413px">47.707 mm</div>
 <div class="lb" style="top:443px">Center Position Y</div><div class="vl" style="top:443px">-60.50 mm</div>
 <div class="lb" style="top:473px">Center Position Z</div><div class="vl" style="top:473px">-33.885 mm</div>
 <div class="sep" style="top:500px"></div>
 <div class="tri" style="top:517px"></div><div class="sec" style="top:513px">Selection 2</div>
 <div class="lb gr" style="top:543px">Vertex selected</div>
 <div class="lb" style="top:573px">Position X</div><div class="vl" style="top:573px">47.452 mm</div>
 <div class="lb" style="top:603px">Position Y</div><div class="vl" style="top:603px">14.088 mm</div>
 <div class="lb" style="top:633px">Position Z</div><div class="vl" style="top:633px">-34.294 mm</div>
 <div class="foot"></div>
 <div class="btn">Close</div>
</div>
<svg id="ico" width="793" height="819" style="position:absolute;left:0;top:0">
<defs><linearGradient id="gChk" x1="0" y1="0" x2="0" y2="1"><stop offset="0" stop-color="#f4f4f4"/><stop offset="1" stop-color="#c4c4c4"/></linearGradient></defs>
<rect x="633.4" y="97.3" width="23" height="26.8" rx="2" fill="#1a88d2"/>
<path d="M637.4,107 L640.5,104 L651.6,104 L651.6,114.7 L648.5,117.7 L637.4,117.7 Z" fill="#e6e6e6" stroke="#2f5f22" stroke-width="1"/>
<rect x="637.4" y="107" width="11.1" height="10.7" fill="#82b85c" stroke="#2f5f22" stroke-width="1.2"/>
<path d="M648.5,107 L651.6,104 L651.6,114.7 L648.5,117.7 Z" fill="#c8c8c8"/>
<path d="M647,107.5 L647,117.5 L649.3,115.6 L651,119 L652.6,118.2 L651,114.9 L654,114.7 Z" fill="#fff" stroke="#222" stroke-width="0.9"/>
<path d="M667,106 L670,103 L680,103 L680,113 L677,116 L667,116 Z" fill="#a8d488" stroke="#2f6a22" stroke-width="1.2"/>
<rect x="667" y="106" width="10" height="10" fill="#7fb858" stroke="#2f6a22" stroke-width="1.2"/>
<path d="M674.3,108 L674.3,118 L676.6,116.1 L678.3,119.5 L679.9,118.7 L678.3,115.4 L681.3,115.2 Z" fill="#fff" stroke="#222" stroke-width="0.9"/>
<rect x="695.5" y="103.6" width="7" height="13" rx="1.5" fill="#e4e4e4" stroke="#3a4a3a" stroke-width="1.1"/>
<rect x="695.5" y="110.3" width="7" height="6.3" fill="#7fb858" stroke="#2f6a22" stroke-width="1.1"/>
<path d="M704.3,107.5 L704.3,117.5 L706.6,115.6 L708.3,119 L709.9,118.2 L708.3,114.9 L711.3,114.7 Z" fill="#fff" stroke="#222" stroke-width="0.9"/>
<path d="M637.3,198.2 L642.2,193 L642.2,195.6 L646,195.6 C650,195.6 652.2,198 652.2,201.2 C652.2,204.6 649.6,207.2 646,207.2 L644.4,207.2 L644.4,203.8 L645.8,203.8 C647.4,203.8 648.5,202.6 648.5,201.2 C648.5,199.8 647.3,198.8 645.8,198.8 L642.2,198.8 L642.2,203.4 Z" fill="#6db34b" stroke="#2a6a1c" stroke-width="0.9"/>
<rect x="638.6" y="224.3" width="12.8" height="12.2" rx="2.6" fill="url(#gChk)" stroke="#585858" stroke-width="1.2"/>
<circle cx="532.8" cy="745.5" r="6" fill="#111"/>
<rect x="532" y="744.5" width="1.8" height="5" fill="#fff"/>
<rect x="531.2" y="749" width="3.4" height="1.1" fill="#fff"/>
<rect x="531.2" y="744.5" width="2" height="1.1" fill="#fff"/>
<circle cx="532.9" cy="742.2" r="1.1" fill="#fff"/>
</svg>
</body></html>
